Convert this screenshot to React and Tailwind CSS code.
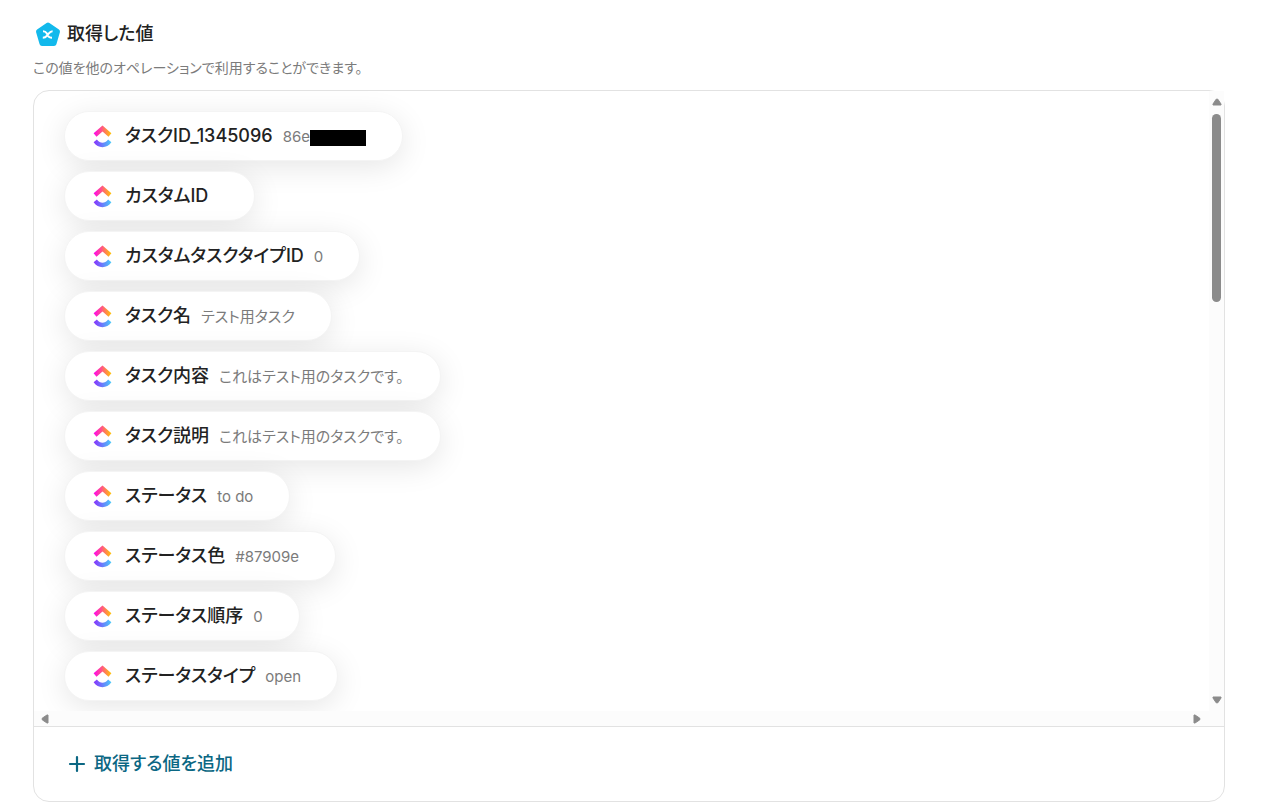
import React from 'react';

const outputs = [
  { label: 'タスクID_1345096', value: '86e', masked: true },
  { label: 'カスタムID', value: '' },
  { label: 'カスタムタスクタイプID', value: '0' },
  { label: 'タスク名', value: 'テスト用タスク' },
  { label: 'タスク内容', value: 'これはテスト用のタスクです。' },
  { label: 'タスク説明', value: 'これはテスト用のタスクです。' },
  { label: 'ステータス', value: 'to do' },
  { label: 'ステータス色', value: '#87909e' },
  { label: 'ステータス順序', value: '0' },
  { label: 'ステータスタイプ', value: 'open' },
];

function VariableIcon() {
  return (
    <svg viewBox="0 0 26 26" className="h-[26px] w-[26px] shrink-0" aria-hidden="true">
      <path
        d="M13 4 22.5 10.6 19 22.5H7L3.5 10.6Z"
        fill="#12b9ec"
        stroke="#12b9ec"
        strokeWidth="5"
        strokeLinejoin="round"
      />
      <path
        d="M8 10.2c2 0 2.900.6 3.700 2l1.200 2.400c.8 1.500 1.700 2.200 4.100 2.200M17.600 10.200c-1.800 0-2.700.8-4 2.500l-1.500 1.900c-1.300 1.600-2.300 2.200-4.300 2.200"
        fill="none"
        stroke="#fff"
        strokeWidth="2"
      />
    </svg>
  );
}

function ClickUpIcon({ id }) {
  return (
    <svg viewBox="0 0 20 24" className="h-6 w-5 shrink-0" aria-hidden="true">
      <defs>
        <linearGradient id={`${id}-top`} x1="0" x2="1">
          <stop offset="0" stopColor="#ff02f0" />
          <stop offset="0.5" stopColor="#ff5f79" />
          <stop offset="1" stopColor="#ffc800" />
        </linearGradient>
        <linearGradient id={`${id}-bottom`} x1="0" x2="1">
          <stop offset="0" stopColor="#8930fd" />
          <stop offset="1" stopColor="#49ccf9" />
        </linearGradient>
      </defs>
      <path d="M.6 9.300 9.500 1.500l8.900 7.800-2.900 3.400-6-5.300-6 5.300Z" fill={`url(#${id}-top)`} />
      <path
        d="M.6 18.300 3.900 15.500c1.700 2.200 3.600 3.300 5.600 3.300s3.900-1.100 5.600-3.300l3.300 2.800C16 21.600 13 23.200 9.500 23.200S3 21.600.6 18.300Z"
        fill={`url(#${id}-bottom)`}
      />
    </svg>
  );
}

function Arrow({ className }) {
  return (
    <svg viewBox="0 0 10 8" className={`h-2 w-[10px] shrink-0 ${className}`} aria-hidden="true">
      <path d="M4.200 1.200h1.600L9 6v1H1V6Z" fill="#8b8b8b" stroke="#8b8b8b" strokeLinejoin="round" />
    </svg>
  );
}

function OutputPill({ output, index }) {
  return (
    <li className="flex h-[50px] items-center rounded-full border border-[#f4f4f4] bg-white pr-9 pl-7 shadow-[0_6px_30px_rgba(0,0,0,0.1)]">
      <ClickUpIcon id={`task-${index}`} />
      <span className="ml-3 text-[18px] leading-6 font-medium whitespace-nowrap text-[#222]">{output.label}</span>
      <span className="ml-[10px] flex items-center pt-[2px] text-[15px] leading-6 whitespace-nowrap text-[#7b7b7b]">
        {output.value}
        {output.masked && <span className="mt-[2px] h-4 w-14 bg-black" />}
      </span>
    </li>
  );
}

export default function App() {
  return (
    <main className="bg-white px-[33px] pt-5 pb-[10px] font-[Inter,'Noto_Sans_CJK_JP',sans-serif] [font-feature-settings:'palt']">
      <header className="pr-1">
        <h1 className="flex items-center gap-[6px] pl-[2px] text-[18px] leading-7 font-medium text-[#222]">
          <VariableIcon />
          取得した値
        </h1>
        <p className="mt-2 text-[14px] leading-6 text-[#7b7b7b]">この値を他のオペレーションで利用することができます。</p>
      </header>

      <section className="mt-[10px] mr-1 rounded-2xl border border-[#e2e2e2]">
        <div className="flex">
          <div className="h-[620px] min-w-0 flex-1 overflow-auto rounded-tl-2xl [scrollbar-width:none]">
            <ul className="flex flex-col items-start gap-[10px] px-[30px] py-5">
              {outputs.map((output, index) => (
                <OutputPill key={output.label} output={output} index={index} />
              ))}
            </ul>
          </div>
          <div className="flex w-[15px] flex-col items-center bg-[#fcfcfc] py-[7px]">
            <Arrow className="" />
            <div className="mt-2 h-[188px] w-[9px] rounded-full bg-[#8b8b8b]" />
            <Arrow className="mt-auto rotate-180" />
          </div>
        </div>
        <div className="flex h-[15px] items-center justify-between bg-[#fcfcfc] pr-[22px] pl-[6px]">
          <Arrow className="-rotate-90" />
          <Arrow className="rotate-90" />
        </div>
        <div className="border-t border-[#e2e2e2] px-[34px] py-6">
          <button type="button" className="flex items-center gap-2 text-[18px] leading-[26px] font-medium text-[#0b6783]">
            <svg viewBox="0 0 18 18" className="h-[18px] w-[18px]" aria-hidden="true">
              <path d="M9 2v14M2 9h14" fill="none" stroke="currentColor" strokeWidth="2.2" strokeLinecap="round" />
            </svg>
            取得する値を追加
          </button>
        </div>
      </section>
    </main>
  );
}
